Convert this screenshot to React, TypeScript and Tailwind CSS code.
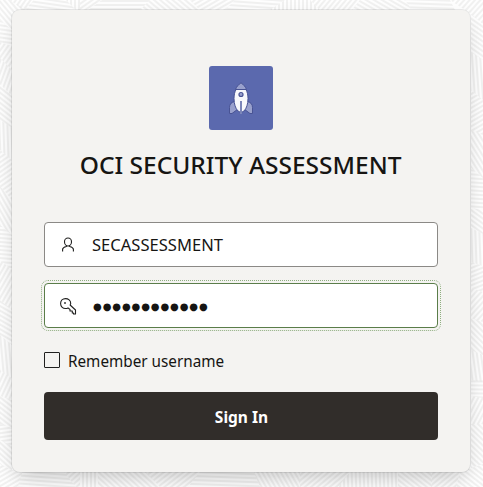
import React from "react";

type Patch = { points: string; angle: number };

const patches: Patch[] = [
  { points: "0,0 10,0 26,10 12,30 0,20", angle: 50 },
  { points: "10,0 34,0 26,12", angle: -55 },
  { points: "34,0 66,0 76,10 24,10", angle: 8 },
  { points: "66,0 80,0 80,10 76,10", angle: 90 },
  { points: "80,0 102,0 88,10 80,10", angle: -35 },
  { points: "102,0 150,0 140,10 88,10", angle: 0 },
  { points: "150,0 190,0 200,10 140,10", angle: 40 },
  { points: "190,0 235,0 225,10 200,10", angle: -30 },
  { points: "235,0 285,0 270,10 225,10", angle: 4 },
  { points: "285,0 310,0 320,10 270,10", angle: 90 },
  { points: "310,0 360,0 352,10 320,10", angle: -50 },
  { points: "360,0 405,0 412,10 352,10", angle: 30 },
  { points: "405,0 450,0 455,10 412,10", angle: 2 },
  { points: "450,0 483,0 483,24 471,14", angle: -48 },
  { points: "0,20 12,30 12,46 0,42", angle: 8 },
  { points: "0,42 12,46 12,70 0,58", angle: -55 },
  { points: "0,58 12,70 12,96 0,84", angle: -70 },
  { points: "0,84 12,96 12,128 0,120", angle: 38 },
  { points: "0,120 12,128 12,160 0,150", angle: 88 },
  { points: "0,150 12,160 12,200 0,186", angle: -35 },
  { points: "0,186 12,200 12,235 0,225", angle: 60 },
  { points: "0,225 12,235 12,270 0,260", angle: 5 },
  { points: "0,260 12,270 12,310 0,300", angle: -60 },
  { points: "0,300 12,310 12,345 0,335", angle: 30 },
  { points: "0,335 12,345 12,378 0,370", angle: 85 },
  { points: "0,370 12,378 12,400 0,396", angle: -65 },
  { points: "0,396 12,400 12,428 0,424", angle: 38 },
  { points: "0,424 12,428 12,446 0,440", angle: -8 },
  { points: "0,440 12,446 12,470 0,464", angle: 42 },
  { points: "0,464 12,470 22,473 18,487 0,487", angle: -30 },
  { points: "22,472 64,472 76,487 18,487", angle: 4 },
  { points: "64,472 80,472 80,487 76,487", angle: -42 },
  { points: "80,472 98,472 98,487 80,487", angle: 90 },
  { points: "98,472 146,472 160,487 98,487", angle: 42 },
  { points: "146,472 200,472 188,487 160,487", angle: -38 },
  { points: "200,472 254,472 260,487 188,487", angle: 2 },
  { points: "254,472 300,472 300,487 260,487", angle: 60 },
  { points: "300,472 350,472 338,487 300,487", angle: -40 },
  { points: "350,472 398,472 398,487 338,487", angle: 88 },
  { points: "398,472 432,472 432,487 398,487", angle: 38 },
  { points: "432,472 460,472 456,487 432,487", angle: -40 },
  { points: "460,472 483,464 483,487 456,487", angle: 38 },
  { points: "471,14 483,24 483,60 471,52", angle: 35 },
  { points: "471,52 483,60 483,100 471,90", angle: 86 },
  { points: "471,90 483,100 483,135 471,130", angle: -30 },
  { points: "471,130 483,135 483,178 471,168", angle: 58 },
  { points: "471,168 483,178 483,210 471,208", angle: 4 },
  { points: "471,208 483,210 483,234 471,228", angle: 36 },
  { points: "471,228 483,234 483,266 471,262", angle: 88 },
  { points: "471,262 483,266 483,292 471,288", angle: -22 },
  { points: "471,288 483,292 483,322 471,318", angle: -48 },
  { points: "471,318 483,322 483,355 471,350", angle: 45 },
  { points: "471,350 483,355 483,382 471,380", angle: 82 },
  { points: "471,380 483,380 483,398 471,396", angle: 1 },
  { points: "471,396 483,398 483,424 471,424", angle: -62 },
  { points: "471,424 483,424 483,464 471,468", angle: 44 },
];

function Backdrop() {
  return (
    <svg className="absolute inset-0" width="483" height="487" aria-hidden="true">
      <defs>
        {patches.map((p, i) => (
          <pattern key={i} id={`hatch${i}`} width="8" height="4" patternUnits="userSpaceOnUse" patternTransform={`rotate(${p.angle})`}>
            <path d="M0 1h8" stroke="#e4e4e3" strokeWidth="1" />
          </pattern>
        ))}
      </defs>
      <rect width="483" height="487" fill="#fefefe" />
      {patches.map((p, i) => (
        <polygon key={i} points={p.points} fill={`url(#hatch${i})`} />
      ))}
    </svg>
  );
}

function Rocket() {
  return (
    <svg width="64" height="64" viewBox="0 0 64 64" aria-hidden="true">
      <g stroke="#485394" strokeWidth="1" strokeLinejoin="round">
        <path d="M26 35.500c-3.500.5-5.500 2.500-5.500 6v6h2.500l6-4.500zM38 35.500c3.500.5 5.500 2.500 5.500 6v6H41L35 43z" fill="#99a1cd" />
        <path d="M27 23.500h10c1.300 2.500 2 5.500 2 9 0 5.500-1.500 10-4 12.500-1.500 1.200-4.500 1.200-6 0-2.500-2.500-4-7-4-12.500 0-3.500.7-6.500 2-9z" fill="#f8f9fc" />
        <path d="M32 16.800c-2.300 1.700-4.600 4-5.500 6.700h11c-.9-2.700-3.200-5-5.500-6.700z" fill="#99a1cd" />
        <circle cx="32" cy="28.500" r="2" fill="#99a1cd" strokeWidth="1.200" />
      </g>
      <path d="M32 35v13" stroke="#7c86b9" strokeWidth="2" />
    </svg>
  );
}

function UserIcon() {
  return (
    <svg width="13" height="15" viewBox="0 0 13 15" fill="none" stroke="#20201f" strokeWidth="1.100" aria-hidden="true">
      <path d="M6 1C4 1 2.500 2.500 2.500 4.700S4 9 6 9s3.500-2.100 3.500-4.300S8 1 6 1zM.6 14.500v-2C.6 11 2.300 10 4.300 9.500L5.200 8.700M11.400 14.500v-2c0-1.500-1.700-2.500-3.700-3L6.800 8.700" />
    </svg>
  );
}

function KeyIcon() {
  return (
    <svg className="mt-[2px]" width="17" height="17" viewBox="0 0 17 17" fill="none" stroke="#20201f" strokeWidth="1.100" strokeLinejoin="round" aria-hidden="true">
      <path d="M5.500.6C2.700.6.6 2.700.6 5.500s2.100 5 4.900 5c1 0 1.800-.2 2.500-.6l2 1.600v1.500h2.300v2h1.200v1h2v-4L10.100 7c.4-.7.6-1.100.6-1.800C10.700 2.600 8.300.6 5.500.6z" />
      <rect x="4.200" y="4.200" width="1.600" height="1.600" fill="#20201f" stroke="none" />
    </svg>
  );
}

export default function App() {
  return (
    <main className="relative flex h-[487px] w-[483px] overflow-hidden pt-[10px] pl-3 font-['Noto_Sans','Open_Sans',sans-serif] text-[#161513]">
      <Backdrop />
      <section className="relative flex h-[462px] w-[458px] flex-col rounded-lg bg-[#f4f3f1] px-8 pt-14 shadow-[0_0_0_1px_rgba(0,0,0,0.08),0_12px_20px_-8px_rgba(0,0,0,0.18),0_4px_16px_rgba(0,0,0,0.06)]">
        <div className="h-16 w-16 self-center overflow-hidden rounded-[3px] bg-[#5b69ae]">
          <Rocket />
        </div>
        <h1 className="mt-[17px] flex h-9 items-center justify-center whitespace-nowrap text-[24px] font-medium">
          <span className="inline-block scale-x-[1.021]">OCI SECURITY ASSESSMENT</span>
        </h1>
        <div className="mt-[39px] flex h-[45px] shrink-0 items-center rounded-[4px] border border-[#8b8986] bg-white pl-[17px]">
          <UserIcon />
          <span className="ml-[17px] origin-left scale-x-[1.035] text-[16px]">SECASSESSMENT</span>
        </div>
        <div className="mt-4 flex h-[45px] shrink-0 items-center rounded-[4px] border border-[#5a7d49] bg-white pl-[15px] outline-1 outline-offset-2 outline-dotted outline-[#8fae80]">
          <KeyIcon />
          <span className="ml-4 pt-[2px] font-['DejaVu_Sans',sans-serif] text-[10px] leading-none tracking-[0.9px]">●●●●●●●●●●●●</span>
        </div>
        <label className="mt-[21px] flex h-6 items-center">
          <span className="mb-[2px] h-4 w-4 rounded-[1px] border border-[#20201f]" />
          <span className="ml-2 origin-left scale-x-[0.955] whitespace-nowrap text-[16px]">Remember username</span>
        </label>
        <button className="mt-[19px] h-12 shrink-0 rounded-[4px] bg-[#312d2a] pt-[2px] text-[16px] font-bold text-white">
          <span className="inline-block scale-x-[0.97]">Sign In</span>
        </button>
      </section>
    </main>
  );
}
